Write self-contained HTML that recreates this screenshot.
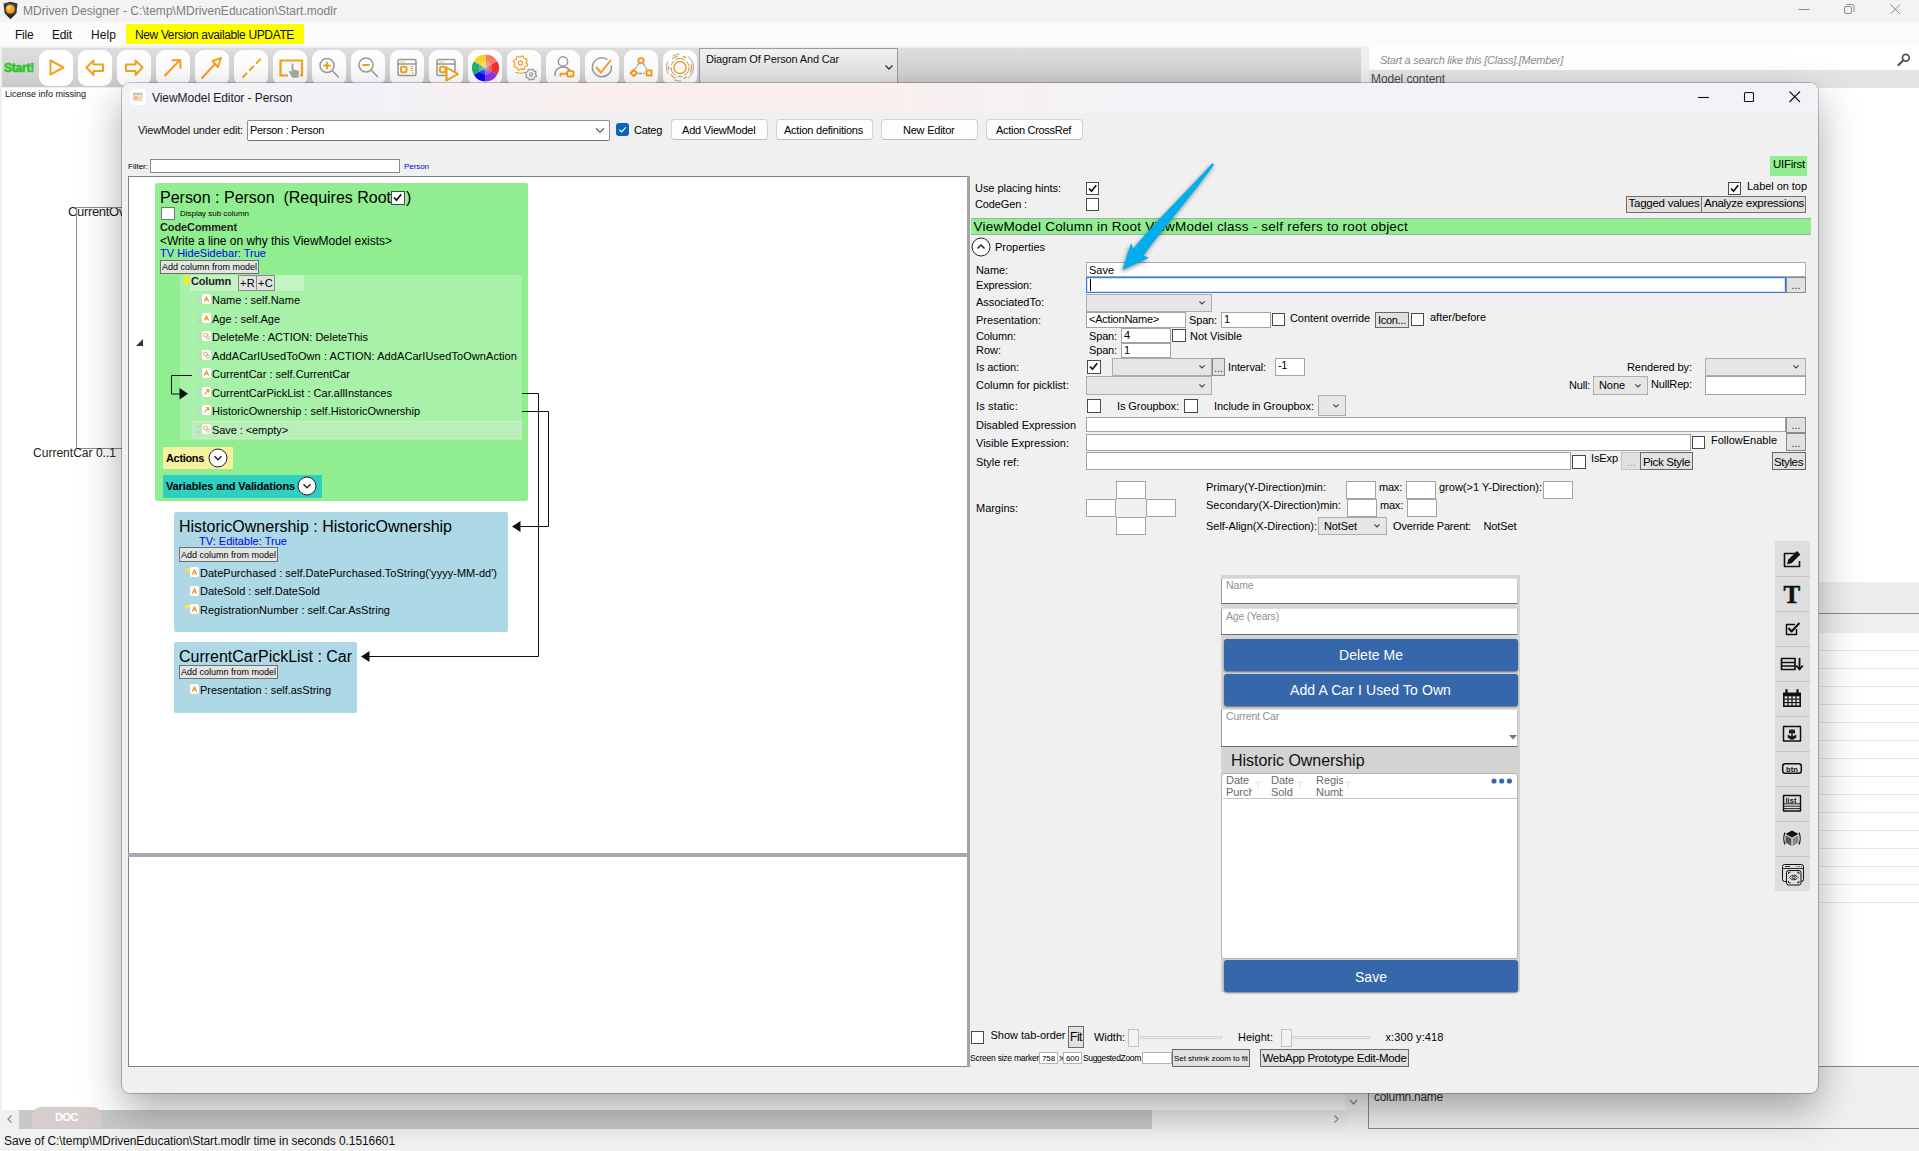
<!DOCTYPE html>
<html><head><meta charset="utf-8"><title>MDriven Designer</title>
<style>
*{box-sizing:border-box;margin:0;padding:0}
html,body{width:1919px;height:1151px;overflow:hidden;background:#fff}
body{font-family:"Liberation Sans",sans-serif;font-size:11px;color:#000;position:relative}
.a{position:absolute;white-space:nowrap}
.t{position:absolute;white-space:pre;line-height:1}
svg{overflow:visible}
</style></head><body>
<div class="a" style="left:0px;top:0px;width:1919px;height:22px;background:#f3f3f3"></div>
<svg class="a" style="left:2px;top:1px" width="17" height="19" viewBox="0 0 17 19"><path d="M1.5 2.5 L8.5 0.8 L15.5 2.5 L14.5 12 L8.5 18 L2.5 12 Z" fill="#3a3a3a"/><circle cx="8.3" cy="8" r="4.6" fill="#f7a21c"/><circle cx="7" cy="6.6" r="2.2" fill="#ffd268"/><path d="M3 12.5 L8.5 15 L14 12.5 L8.5 18Z" fill="#222"/></svg>
<div class="t" style="left:23px;top:5px;font-size:12px;letter-spacing:0.034px;color:#7d7d7d;">MDriven Designer - C:\temp\MDrivenEducation\Start.modlr</div>
<svg class="a" style="left:1790px;top:0" width="129" height="22" viewBox="0 0 129 22" fill="none" stroke="#8a8a8a" stroke-width="1"><path d="M8.5 9.5h11"/><rect x="54.500" y="6.500" width="7" height="7" rx="1.5"/><path d="M56.5 4.500h5.500a2 2 0 0 1 2 2v5.500"/><path d="M100.500 4.500l9.500 9.500M110 4.500l-9.500 9.500"/></svg>
<div class="a" style="left:0px;top:22px;width:1919px;height:24px;background:#fbfbfb"></div>
<div class="t" style="left:15px;top:29px;font-size:12px;letter-spacing:-0.211px;color:#111;">File</div>
<div class="t" style="left:52px;top:29px;font-size:12px;letter-spacing:-0.172px;color:#111;">Edit</div>
<div class="t" style="left:91px;top:29px;font-size:12px;letter-spacing:0.078px;color:#111;">Help</div>
<div class="a" style="left:126px;top:24px;width:178px;height:20px;background:#ffff00"></div>
<div class="t" style="left:135px;top:29px;font-size:12px;letter-spacing:-0.364px;color:#111;">New Version available UPDATE</div>
<div class="a" style="left:0px;top:46px;width:1919px;height:42px;background:#f0f0f0"></div>
<div class="a" style="left:2px;top:48px;width:1359px;height:39px;background:linear-gradient(#dddddd,#d4d4d4 60%,#cacaca)"></div>
<div class="t" style="left:4px;top:62px;font-size:12px;letter-spacing:-0.224px;color:#2fc42f;font-weight:700;text-shadow:0 0 1.5px #4fd24f;-webkit-text-stroke:.4px #2fc42f">Start!</div>
<svg class="a" style="left:0;top:46px" width="1361" height="42" viewBox="0 46 1361 42" fill="none" stroke-linecap="round" stroke-linejoin="round"><rect x="39" y="50" width="34" height="36" rx="9" fill="#fefefe" stroke="none"/><rect x="78" y="50" width="34" height="36" rx="9" fill="#fefefe" stroke="none"/><rect x="117" y="50" width="34" height="36" rx="9" fill="#fefefe" stroke="none"/><rect x="156" y="50" width="34" height="36" rx="9" fill="#fefefe" stroke="none"/><rect x="195" y="50" width="34" height="36" rx="9" fill="#fefefe" stroke="none"/><rect x="234" y="50" width="34" height="36" rx="9" fill="#fefefe" stroke="none"/><rect x="273" y="50" width="34" height="36" rx="9" fill="#fefefe" stroke="none"/><rect x="312" y="50" width="34" height="36" rx="9" fill="#fefefe" stroke="none"/><rect x="351" y="50" width="34" height="36" rx="9" fill="#fefefe" stroke="none"/><rect x="390" y="50" width="34" height="36" rx="9" fill="#fefefe" stroke="none"/><rect x="429" y="50" width="34" height="36" rx="9" fill="#fefefe" stroke="none"/><rect x="468" y="50" width="34" height="36" rx="9" fill="#fefefe" stroke="none"/><rect x="507" y="50" width="34" height="36" rx="9" fill="#fefefe" stroke="none"/><rect x="546" y="50" width="34" height="36" rx="9" fill="#fefefe" stroke="none"/><rect x="585" y="50" width="34" height="36" rx="9" fill="#fefefe" stroke="none"/><rect x="624" y="50" width="34" height="36" rx="9" fill="#fefefe" stroke="none"/><rect x="663" y="50" width="34" height="36" rx="9" fill="#fefefe" stroke="none"/><g transform="translate(39,50)"><path d="M11.500 10.500V24.500L24.500 17.500Z" stroke="#f5a01f" stroke-width="2"/></g><g transform="translate(78,50)"><path d="M8.500 17.500L15.500 10.500V14.500H25V21H15.500V25Z" stroke="#f5a01f" stroke-width="2"/></g><g transform="translate(117,50)"><path d="M25.500 17.500L18.500 10.500V14.500H9V21H18.500V25Z" stroke="#f5a01f" stroke-width="2"/></g><g transform="translate(156,50)"><path d="M9 25.500L24 10M16.500 10.300L24.200 10L24.500 18" stroke="#f5a01f" stroke-width="2"/></g><g transform="translate(195,50)"><path d="M7 28L20 14M26 8L17.500 11L23 17Z" stroke="#f5a01f" stroke-width="2"/></g><g transform="translate(234,50)"><path d="M9 27L27 8.500" stroke="#f5a01f" stroke-width="2" stroke-dasharray="5 4.800" stroke-linecap="round"/></g><g transform="translate(273,50)"><path d="M15 25.500H7.500V10.500H29V25.500H27" stroke="#f5a01f" stroke-width="2.2" stroke-linecap="butt" stroke-linejoin="miter"/><path d="M18.500 14.500c0-1.300 2-1.300 2 0v5l4 .8c1.500.4 1.800 1.500 1.500 3l-.8 4.500h-6l-3.200-5.500c-.6-1.200.8-2 1.700-1l.8 1z" fill="#a9a9a9" stroke="none"/></g><g transform="translate(312,50)"><circle cx="15" cy="15.500" r="7" stroke="#9a9a9a" stroke-width="1.5"/><path d="M20.300 20.800L26.500 27" stroke="#9a9a9a" stroke-width="1.5"/><path d="M12 15.500h6M15 12.500v6" stroke="#f5a01f" stroke-width="1.8"/></g><g transform="translate(351,50)"><circle cx="15" cy="15" r="7" stroke="#9a9a9a" stroke-width="1.5"/><path d="M20.300 20.300L26.500 26.500" stroke="#9a9a9a" stroke-width="1.5"/><path d="M12 15h6" stroke="#f5a01f" stroke-width="1.8"/></g><g transform="translate(390,50)"><rect x="8" y="9.500" width="18" height="16" rx="1.500" stroke="#9a9a9a" stroke-width="1.5"/><path d="M8 14h18" stroke="#9a9a9a" stroke-width="1.5"/><path d="M10.500 11.800h4.500" stroke="#f5a01f" stroke-width="1.200" stroke-dasharray="1 .8" stroke-linecap="butt"/><rect x="11" y="16.800" width="5.500" height="5.500" rx="1" stroke="#f5a01f" stroke-width="2"/><path d="M20.500 16.500h2.500M20.500 18.500h2.500M20.500 20.500h2.500M22 23h1.500" stroke="#f5a01f" stroke-width="1" stroke-linecap="butt"/></g><g transform="translate(429,50)"><rect x="8" y="9.500" width="18" height="16" rx="1.500" stroke="#9a9a9a" stroke-width="1.5"/><path d="M8 14h18" stroke="#9a9a9a" stroke-width="1.5"/><path d="M10.500 11.800h4.500" stroke="#f5a01f" stroke-width="1.200" stroke-dasharray="1 .8" stroke-linecap="butt"/><rect x="11" y="16.800" width="5.500" height="5.500" rx="1" stroke="#f5a01f" stroke-width="2"/><path d="M17.500 17.500V30.500L29 24Z" stroke="#f5a01f" stroke-width="2" fill="#fefefe"/></g><g transform="translate(468,50)"><path d="M17.5 18L17.50 4.50A13.5 13.5 0 0 1 29.19 11.25Z" fill="#fa7a6a" stroke="none"/><path d="M17.5 18L29.19 11.25A13.5 13.5 0 0 1 29.19 24.75Z" fill="#f23030" stroke="none"/><path d="M17.5 18L29.19 24.75A13.5 13.5 0 0 1 17.50 31.50Z" fill="#8a35e6" stroke="none"/><path d="M17.5 18L17.50 31.50A13.5 13.5 0 0 1 5.81 24.75Z" fill="#0a0af0" stroke="none"/><path d="M17.5 18L5.81 24.75A13.5 13.5 0 0 1 5.81 11.25Z" fill="#1fb273" stroke="none"/><path d="M17.5 18L5.81 11.25A13.5 13.5 0 0 1 17.50 4.50Z" fill="#f8d223" stroke="none"/><circle cx="17.5" cy="18" r="7" fill="#fff" fill-opacity=".22" stroke="none"/><circle cx="17.5" cy="18" r="3.500" fill="#fff" fill-opacity=".2" stroke="none"/></g><g transform="translate(507,50)"><path d="M20.66 14.42L20.24 15.79L18.36 16.24L17.63 17.13L17.56 19.07L16.29 19.74L14.64 18.73L13.50 18.84L12.08 20.16L10.71 19.74L10.26 17.86L9.37 17.13L7.43 17.06L6.76 15.79L7.77 14.14L7.66 13.00L6.34 11.58L6.76 10.21L8.64 9.76L9.37 8.87L9.44 6.93L10.71 6.26L12.36 7.27L13.50 7.16L14.92 5.84L16.29 6.26L16.74 8.14L17.63 8.87L19.57 8.94L20.24 10.21L19.23 11.86L19.34 13.00Z" stroke="#f5a01f" stroke-width="1.2"/><circle cx="13.5" cy="13" r="2.04" stroke="#f5a01f" stroke-width="1.2"/><path d="M9 22.500c3 1 6 1 9 0" stroke="#f5a01f" stroke-width="1.100"/><path d="M29.49 25.59L29.17 26.64L27.72 26.99L27.17 27.67L27.11 29.16L26.14 29.67L24.87 28.89L24.00 28.98L22.91 29.99L21.86 29.67L21.51 28.22L20.83 27.67L19.34 27.61L18.83 26.64L19.61 25.37L19.52 24.50L18.51 23.41L18.83 22.36L20.28 22.01L20.83 21.33L20.89 19.84L21.86 19.33L23.13 20.11L24.00 20.02L25.09 19.01L26.14 19.33L26.49 20.78L27.17 21.33L28.66 21.39L29.17 22.36L28.39 23.63L28.48 24.50Z" stroke="#9a9a9a" stroke-width="1.2"/><circle cx="24" cy="24.5" r="1.57" stroke="#9a9a9a" stroke-width="1.2"/></g><g transform="translate(546,50)"><circle cx="17" cy="11.500" r="4.700" stroke="#9a9a9a" stroke-width="1.5"/><path d="M9 25.500c-.5-6 4-8.500 8-8.500 3 0 5 1.200 6.500 3" stroke="#9a9a9a" stroke-width="1.5"/><rect x="21" y="21" width="6.500" height="5.500" rx="2" stroke="#f5a01f" stroke-width="2"/><path d="M21 23.800h-6.500v2" stroke="#f5a01f" stroke-width="2"/><circle cx="24.500" cy="23.800" r=".6" fill="#f5a01f" stroke="none"/></g><g transform="translate(585,50)"><path d="M22 9.300A9.500 9.500 0 1 0 26.300 16" stroke="#9a9a9a" stroke-width="1.5"/><path d="M11.500 17.500L16 22.500L25.500 10.500" stroke="#f5a01f" stroke-width="2"/></g><g transform="translate(624,50)"><circle cx="17" cy="10.500" r="2.600" stroke="#f5a01f" stroke-width="2"/><path d="M9.800 19.800L13 23L9.800 26.200L6.600 23Z" stroke="#f5a01f" stroke-width="2"/><rect x="22.500" y="20.500" width="5" height="5" stroke="#f5a01f" stroke-width="2"/><path d="M14.800 13.500L11.500 18.500M19.200 13.500L22.500 18.500M15 23.500H20" stroke="#9a9a9a" stroke-width="1.300" stroke-dasharray="2.500 2"/></g><g transform="translate(663,50)"><circle cx="17" cy="17.500" r="6" stroke="#f5a01f" stroke-width="1.400"/><circle cx="17" cy="17.500" r="9" stroke="#9a9a9a" stroke-width="1" stroke-dasharray="9 3 4 3"/><circle cx="17" cy="17.500" r="11.500" stroke="#f5a01f" stroke-width="1.300" stroke-dasharray="5 6 3 9"/><circle cx="17" cy="17.500" r="13.500" stroke="#9a9a9a" stroke-width=".9" stroke-dasharray="12 8 6 10"/></g></svg>
<div class="a" style="left:699px;top:48px;width:199px;height:40px;background:linear-gradient(#f0f0f0,#dddddd);border:1px solid #9c9c9c"></div>
<div class="t" style="left:706px;top:54px;font-size:11px;letter-spacing:-0.158px;color:#111;">Diagram Of Person And Car</div>
<svg class="a" style="left:884px;top:64px" width="10" height="7" viewBox="0 0 10 7" fill="none" stroke="#333" stroke-width="1.300"><path d="M1.500 1.500L5 5L8.500 1.500"/></svg>
<div class="a" style="left:1369px;top:46px;width:550px;height:24px;background:#fff"></div>
<div class="t" style="left:1380px;top:55px;font-size:11px;letter-spacing:-0.278px;color:#8e8e8e;font-style:italic;">Start a search like this [Class].[Member]</div>
<svg class="a" style="left:1896px;top:52px" width="16" height="16" viewBox="0 0 16 16" fill="none" stroke="#555" stroke-width="1.800"><circle cx="9.800" cy="5.800" r="3.400"/><path d="M7.300 8.300L2.500 13" stroke-width="2.200" stroke-linecap="round"/></svg>
<div class="a" style="left:1369px;top:70px;width:550px;height:18px;background:#e4e4e4"></div>
<div class="t" style="left:1371px;top:73px;font-size:12px;letter-spacing:-0.107px;color:#4a4a4a;">Model content</div>
<div class="a" style="left:0px;top:88px;width:2px;height:1040px;background:#f0f0f0"></div>
<div class="t" style="left:5px;top:90px;font-size:9px;letter-spacing:-0.002px;color:#111;">License info missing</div>
<div class="t" style="left:68px;top:205px;font-size:13px;letter-spacing:-0.33px;color:#222;">CurrentOv</div>
<div class="a" style="left:76px;top:207px;width:1px;height:242px;background:#8c8c8c"></div>
<div class="a" style="left:76px;top:207px;width:50px;height:1px;background:#8c8c8c"></div>
<div class="a" style="left:76px;top:448px;width:50px;height:1px;background:#8c8c8c"></div>
<div class="t" style="left:33px;top:447px;font-size:12px;letter-spacing:0.02px;color:#222;">CurrentCar 0..1</div>
<div class="a" style="left:1819px;top:582px;width:100px;height:31px;background:#eeeeee"></div>
<div class="a" style="left:1819px;top:613px;width:100px;height:1px;background:#8a8a8a"></div>
<div class="a" style="left:1819px;top:614px;width:100px;height:19px;background:#efefef"></div>
<div class="a" style="left:1819px;top:650px;width:100px;height:1px;background:#e6e6e6"></div>
<div class="a" style="left:1819px;top:668px;width:100px;height:1px;background:#e6e6e6"></div>
<div class="a" style="left:1819px;top:686px;width:100px;height:1px;background:#e6e6e6"></div>
<div class="a" style="left:1819px;top:704px;width:100px;height:1px;background:#e6e6e6"></div>
<div class="a" style="left:1819px;top:722px;width:100px;height:1px;background:#e6e6e6"></div>
<div class="a" style="left:1819px;top:740px;width:100px;height:1px;background:#e6e6e6"></div>
<div class="a" style="left:1819px;top:758px;width:100px;height:1px;background:#e6e6e6"></div>
<div class="a" style="left:1819px;top:776px;width:100px;height:1px;background:#e6e6e6"></div>
<div class="a" style="left:1819px;top:794px;width:100px;height:1px;background:#e6e6e6"></div>
<div class="a" style="left:1819px;top:812px;width:100px;height:1px;background:#e6e6e6"></div>
<div class="a" style="left:1819px;top:830px;width:100px;height:1px;background:#e6e6e6"></div>
<div class="a" style="left:1819px;top:848px;width:100px;height:1px;background:#e6e6e6"></div>
<div class="a" style="left:1819px;top:866px;width:100px;height:1px;background:#e6e6e6"></div>
<div class="a" style="left:1819px;top:884px;width:100px;height:1px;background:#e6e6e6"></div>
<div class="a" style="left:1819px;top:902px;width:100px;height:1px;background:#e6e6e6"></div>
<div class="a" style="left:1819px;top:1066px;width:100px;height:1px;background:#8a8a8a"></div>
<div class="a" style="left:1368px;top:1067px;width:551px;height:62px;background:#f0f0f0;border-left:1px solid #8a8a8a;border-bottom:1px solid #8a8a8a"></div>
<div class="t" style="left:1374px;top:1091px;font-size:12px;letter-spacing:-0.277px;color:#333;">column.name</div>
<div class="a" style="left:0px;top:1110px;width:1368px;height:19px;background:#f0f0f0"></div>
<div class="a" style="left:1345px;top:1093px;width:23px;height:17px;background:#f6f6f6"></div>
<div class="a" style="left:19px;top:1110px;width:1327px;height:19px;background:#ededed"></div>
<div class="a" style="left:19px;top:1110px;width:1133px;height:19px;background:#c8c8c8"></div>
<div class="a" style="left:32px;top:1107px;width:70px;height:21px;background:#d8cdcd;border-radius:9px 9px 0 0"></div>
<div class="t" style="left:55px;top:1112px;font-size:11px;letter-spacing:-0.484px;color:#fff;font-weight:700;">DOC</div>
<svg class="a" style="left:6px;top:1113px" width="8" height="12" viewBox="0 0 8 12" fill="none" stroke="#8a8a8a" stroke-width="1.200"><path d="M5.500 2.500L2 6L5.500 9.500"/></svg>
<svg class="a" style="left:1332px;top:1113px" width="8" height="12" viewBox="0 0 8 12" fill="none" stroke="#8a8a8a" stroke-width="1.200"><path d="M2.500 2.500L6 6L2.500 9.500"/></svg>
<svg class="a" style="left:1349px;top:1098px" width="10" height="8" viewBox="0 0 10 8" fill="none" stroke="#8a8a8a" stroke-width="1.200"><path d="M1 2L4.500 6L8 2"/></svg>
<div class="a" style="left:0px;top:1129px;width:1919px;height:22px;background:#f1f1f1"></div>
<div class="t" style="left:4px;top:1135px;font-size:12px;letter-spacing:-0.074px;color:#111;">Save of C:\temp\MDrivenEducation\Start.modlr time in seconds 0.1516601</div>
<div class="a" style="left:122px;top:83px;width:1696px;height:1010px;background:#f0f0f0;border-radius:8px;box-shadow:0 0 0 1px rgba(0,0,0,.22),0 16px 40px 0 rgba(0,0,0,.34)"></div>
<div class="a" style="left:122px;top:83px;width:1696px;height:30px;border-radius:8px 8px 0 0;background:linear-gradient(90deg,#f1f2f7 0%,#f3f2f6 16%,#fbefed 30%,#fbefed 42%,#f3f3f7 60%,#f3f3f7 100%)"></div>
<svg class="a" style="left:130px;top:89px" width="16" height="16" viewBox="0 0 16 16"><rect x="0" y="0" width="16" height="16" rx="4" fill="#fff"/><rect x="3.200" y="4" width="9" height="7.500" fill="#f4e7d6" stroke="#d0c6ba" stroke-width=".7"/><rect x="3.200" y="4" width="9" height="2" fill="#c9c2ba"/><rect x="4.500" y="7.500" width="3" height="2.800" fill="#f4ab4e"/><rect x="8.800" y="7.500" width="2" height="2.800" fill="#f7c98c"/></svg>
<div class="t" style="left:152px;top:92px;font-size:12px;letter-spacing:-0.054px;color:#1a1a1a;">ViewModel Editor - Person</div>
<svg class="a" style="left:1690px;top:85px" width="120" height="24" viewBox="0 0 120 24" fill="none" stroke="#111" stroke-width="1.100"><path d="M8 12.500h11"/><rect x="54.500" y="7.500" width="9" height="9" rx="1"/><path d="M99.500 6.500l10.500 10.500M110 6.500l-10.500 10.500"/></svg>
<div class="t" style="left:138px;top:125px;font-size:11px;letter-spacing:-0.174px;color:#111;">ViewModel under edit:</div>
<div class="a" style="left:247px;top:120px;width:363px;height:21px;background:#fff;border:1px solid #8e8e8e;border-bottom-color:#707070;border-radius:2px"></div>
<div class="t" style="left:250px;top:125px;font-size:11px;letter-spacing:-0.325px;">Person : Person</div>
<svg class="a" style="left:595px;top:127px" width="10" height="7" viewBox="0 0 10 7" fill="none" stroke="#444" stroke-width="1.100"><path d="M1 1.300L5 5.300L9 1.300"/></svg>
<div class="a" style="left:616px;top:123px;width:13px;height:13px;background:#0b63c2;border-radius:3px"><svg width="13" height="13" viewBox="0 0 13 13" fill="none" stroke="#fff" stroke-width="1.200" style="position:absolute;left:0;top:0"><path d="M3.300 6.700L5.600 9L9.800 4.300"/></svg></div>
<div class="t" style="left:634px;top:125px;font-size:11px;letter-spacing:-0.272px;">Categ</div>
<div class="a" style="left:671px;top:119px;width:97px;height:21px;background:#fdfdfd;border:1px solid #d2d2d2;border-bottom-color:#bcbcbc;border-radius:4px"></div>
<div class="t" style="left:682px;top:125px;font-size:11px;letter-spacing:-0.21px;">Add ViewModel</div>
<div class="a" style="left:776px;top:119px;width:97px;height:21px;background:#fdfdfd;border:1px solid #d2d2d2;border-bottom-color:#bcbcbc;border-radius:4px"></div>
<div class="t" style="left:784px;top:125px;font-size:11px;letter-spacing:-0.232px;">Action definitions</div>
<div class="a" style="left:881px;top:119px;width:97px;height:21px;background:#fdfdfd;border:1px solid #d2d2d2;border-bottom-color:#bcbcbc;border-radius:4px"></div>
<div class="t" style="left:903px;top:125px;font-size:11px;letter-spacing:-0.23px;">New Editor</div>
<div class="a" style="left:986px;top:119px;width:97px;height:21px;background:#fdfdfd;border:1px solid #d2d2d2;border-bottom-color:#bcbcbc;border-radius:4px"></div>
<div class="t" style="left:996px;top:125px;font-size:11px;letter-spacing:-0.299px;">Action CrossRef</div>
<div class="t" style="left:128px;top:163px;font-size:8px;">Filter:</div>
<div class="a" style="left:150px;top:159px;width:250px;height:14px;background:#fff;border:1px solid #8a8a8a"></div>
<div class="t" style="left:404px;top:163px;font-size:8px;letter-spacing:-0.06px;color:#0000e0;">Person</div>
<div class="a" style="left:128px;top:176px;width:840px;height:681px;background:#fff;border:1px solid #80808c"></div>
<div class="a" style="left:128px;top:853px;width:840px;height:4px;background:#a9a9b2"></div>
<div class="a" style="left:128px;top:857px;width:840px;height:210px;background:#fff;border:1px solid #80808c;border-top:none"></div>
<div class="a" style="left:967px;top:176px;width:3px;height:891px;background:#a4a4a4"></div>
<svg class="a" style="left:136px;top:339px" width="7" height="7" viewBox="0 0 7 7"><path d="M7 0V7H0Z" fill="#333"/></svg>
<div class="a" style="left:155px;top:183px;width:373px;height:318px;background:#90ee90;border-radius:2px"></div>
<div class="t" style="left:160px;top:190px;font-size:16px;letter-spacing:-0.007px;">Person : Person  (Requires Root</div>
<div class="a" style="left:391px;top:191px;width:14px;height:14px;background:#fff;border:1px solid #4a4a4a"><svg width="11" height="11" viewBox="0 0 11 11" style="position:absolute;left:0;top:0" fill="none" stroke="#111" stroke-width="1.700"><path d="M2 5.500L4.500 8.200L9.200 2.300"/></svg></div>
<div class="t" style="left:406px;top:190px;font-size:16px;">)</div>
<div class="a" style="left:161px;top:207px;width:14px;height:13px;background:#fff;border:1px solid #777"></div>
<div class="t" style="left:180px;top:210px;font-size:8px;letter-spacing:-0.021px;">Display sub column</div>
<div class="t" style="left:160px;top:222px;font-size:11px;letter-spacing:-0.112px;color:#222;font-weight:700;">CodeComment</div>
<div class="t" style="left:160px;top:235px;font-size:12px;letter-spacing:-0.023px;">&lt;Write a line on why this ViewModel exists&gt;</div>
<div class="t" style="left:160px;top:248px;font-size:11px;letter-spacing:0.011px;color:#0000f0;">TV HideSidebar: True</div>
<div class="a" style="left:160px;top:260px;width:99px;height:14px;background:#e4e4e4;border:1px solid #707070"></div>
<div class="t" style="left:162px;top:263px;font-size:9px;letter-spacing:-0.002px;color:#000;">Add column from model</div>
<div class="a" style="left:180px;top:275px;width:342px;height:165px;background:#a8f1a8"></div>
<div class="a" style="left:190px;top:275px;width:114px;height:16px;background:#c2f5c2"></div>
<svg class="a" style="left:182px;top:275px" width="9" height="10" viewBox="0 0 9 10"><path d="M3 0h3v4.500h3L4.500 10L0 4.500h3z" fill="#ffe81a"/></svg>
<div class="t" style="left:191px;top:276px;font-size:11px;letter-spacing:-0.159px;color:#222;font-weight:700;">Column</div>
<div class="a" style="left:238px;top:275px;width:19px;height:16px;background:#e2e2e2;border:1px solid #8a8a8a"></div>
<div class="t" style="left:240px;top:278px;font-size:11px;letter-spacing:0.312px;color:#000;">+R</div>
<div class="a" style="left:256px;top:275px;width:19px;height:16px;background:#e2e2e2;border:1px solid #8a8a8a"></div>
<div class="t" style="left:258px;top:278px;font-size:11px;letter-spacing:0.312px;color:#000;">+C</div>
<div class="a" style="left:192px;top:421px;width:330px;height:18px;background:#b9efb9;border:1px solid #cdeacd"></div>
<div class="a" style="left:197px;top:295px;width:5px;height:3px;background:rgba(205,205,205,.85);border-radius:1.5px"></div>
<div class="a" style="left:197px;top:301px;width:5px;height:3px;background:rgba(205,205,205,.85);border-radius:1.5px"></div>
<div class="a" style="left:202px;top:294px;width:9px;height:10px;background:#fdfdfd;border-radius:2px"><svg width="9" height="10" viewBox="0 0 9 10" style="position:absolute;left:0;top:0" fill="none" stroke="#f28c1e" stroke-width="1.100"><path d="M2.300 7.500L4.500 3L6.700 7.500M3.200 6h2.600"/></svg></div>
<div class="t" style="left:212px;top:295px;font-size:11px;letter-spacing:-0.002px;">Name : self.Name</div>
<div class="a" style="left:197px;top:314px;width:5px;height:3px;background:rgba(205,205,205,.85);border-radius:1.5px"></div>
<div class="a" style="left:197px;top:320px;width:5px;height:3px;background:rgba(205,205,205,.85);border-radius:1.5px"></div>
<div class="a" style="left:202px;top:313px;width:9px;height:10px;background:#fdfdfd;border-radius:2px"><svg width="9" height="10" viewBox="0 0 9 10" style="position:absolute;left:0;top:0" fill="none" stroke="#f28c1e" stroke-width="1.100"><path d="M2.300 7.500L4.500 3L6.700 7.500M3.200 6h2.600"/></svg></div>
<div class="t" style="left:212px;top:314px;font-size:11px;letter-spacing:-0.036px;">Age : self.Age</div>
<div class="a" style="left:197px;top:332px;width:5px;height:3px;background:rgba(205,205,205,.85);border-radius:1.5px"></div>
<div class="a" style="left:197px;top:338px;width:5px;height:3px;background:rgba(205,205,205,.85);border-radius:1.5px"></div>
<div class="a" style="left:202px;top:331px;width:9px;height:10px;background:#fdfdfd;border-radius:2px"><svg width="9" height="10" viewBox="0 0 9 10" style="position:absolute;left:0;top:0" fill="none" stroke="#f2a04a" stroke-width=".9"><circle cx="3.500" cy="4" r="2"/><circle cx="6" cy="6.500" r="1.600" stroke="#b0b0b0"/></svg></div>
<div class="t" style="left:212px;top:332px;font-size:11px;letter-spacing:0.004px;">DeleteMe : ACTION: DeleteThis</div>
<div class="a" style="left:197px;top:351px;width:5px;height:3px;background:rgba(205,205,205,.85);border-radius:1.5px"></div>
<div class="a" style="left:197px;top:357px;width:5px;height:3px;background:rgba(205,205,205,.85);border-radius:1.5px"></div>
<div class="a" style="left:202px;top:350px;width:9px;height:10px;background:#fdfdfd;border-radius:2px"><svg width="9" height="10" viewBox="0 0 9 10" style="position:absolute;left:0;top:0" fill="none" stroke="#f2a04a" stroke-width=".9"><circle cx="3.500" cy="4" r="2"/><circle cx="6" cy="6.500" r="1.600" stroke="#b0b0b0"/></svg></div>
<div class="t" style="left:212px;top:351px;font-size:11px;letter-spacing:0.07px;">AddACarIUsedToOwn : ACTION: AddACarIUsedToOwnAction</div>
<div class="a" style="left:197px;top:369px;width:5px;height:3px;background:rgba(205,205,205,.85);border-radius:1.5px"></div>
<div class="a" style="left:197px;top:375px;width:5px;height:3px;background:rgba(205,205,205,.85);border-radius:1.5px"></div>
<div class="a" style="left:202px;top:368px;width:9px;height:10px;background:#fdfdfd;border-radius:2px"><svg width="9" height="10" viewBox="0 0 9 10" style="position:absolute;left:0;top:0" fill="none" stroke="#f28c1e" stroke-width="1.100"><path d="M2.300 7.500L4.500 3L6.700 7.500M3.200 6h2.600"/></svg></div>
<div class="t" style="left:212px;top:369px;font-size:11px;letter-spacing:-0.006px;">CurrentCar : self.CurrentCar</div>
<div class="a" style="left:197px;top:388px;width:5px;height:3px;background:rgba(205,205,205,.85);border-radius:1.5px"></div>
<div class="a" style="left:197px;top:394px;width:5px;height:3px;background:rgba(205,205,205,.85);border-radius:1.5px"></div>
<div class="a" style="left:202px;top:387px;width:9px;height:10px;background:#fdfdfd;border-radius:2px"><svg width="9" height="10" viewBox="0 0 9 10" style="position:absolute;left:0;top:0" fill="none" stroke="#f28c1e" stroke-width="1.100"><path d="M2.500 7.500L6.500 3M4 2.800h2.700v2.700"/></svg></div>
<div class="t" style="left:212px;top:388px;font-size:11px;letter-spacing:0.007px;">CurrentCarPickList : Car.allInstances</div>
<div class="a" style="left:197px;top:406px;width:5px;height:3px;background:rgba(205,205,205,.85);border-radius:1.5px"></div>
<div class="a" style="left:197px;top:412px;width:5px;height:3px;background:rgba(205,205,205,.85);border-radius:1.5px"></div>
<div class="a" style="left:202px;top:405px;width:9px;height:10px;background:#fdfdfd;border-radius:2px"><svg width="9" height="10" viewBox="0 0 9 10" style="position:absolute;left:0;top:0" fill="none" stroke="#f28c1e" stroke-width="1.100"><path d="M2.500 7.500L6.500 3M4 2.800h2.700v2.700"/></svg></div>
<div class="t" style="left:212px;top:406px;font-size:11px;letter-spacing:0.004px;">HistoricOwnership : self.HistoricOwnership</div>
<div class="a" style="left:197px;top:425px;width:5px;height:3px;background:rgba(205,205,205,.85);border-radius:1.5px"></div>
<div class="a" style="left:197px;top:431px;width:5px;height:3px;background:rgba(205,205,205,.85);border-radius:1.5px"></div>
<div class="a" style="left:202px;top:424px;width:9px;height:10px;background:#fdfdfd;border-radius:2px"><svg width="9" height="10" viewBox="0 0 9 10" style="position:absolute;left:0;top:0" fill="none" stroke="#f2a04a" stroke-width=".9"><circle cx="3.500" cy="4" r="2"/><circle cx="6" cy="6.500" r="1.600" stroke="#b0b0b0"/></svg></div>
<div class="t" style="left:212px;top:425px;font-size:11px;letter-spacing:-0.075px;">Save : &lt;empty&gt;</div>
<div class="a" style="left:163px;top:447px;width:70px;height:22px;background:#f7f09f"></div>
<div class="t" style="left:166px;top:453px;font-size:11px;letter-spacing:-0.335px;font-weight:700;">Actions</div>
<svg class="a" style="left:208px;top:448px" width="20" height="20" viewBox="0 0 20 20" fill="none"><circle cx="10" cy="10" r="9" fill="#fff" stroke="#222" stroke-width="1"/><path d="M6.500 8.300L10 11.800L13.500 8.300" stroke="#222" stroke-width="1.500"/></svg>
<div class="a" style="left:163px;top:475px;width:159px;height:23px;background:#2fcfc2"></div>
<div class="t" style="left:166px;top:481px;font-size:11px;letter-spacing:-0.122px;font-weight:700;">Variables and Validations</div>
<svg class="a" style="left:297px;top:476px" width="20" height="20" viewBox="0 0 20 20" fill="none"><circle cx="10" cy="10" r="9" fill="#fff" stroke="#222" stroke-width="1"/><path d="M6.500 8.300L10 11.800L13.500 8.300" stroke="#222" stroke-width="1.500"/></svg>
<div class="a" style="left:174px;top:512px;width:334px;height:120px;background:#add8e6;border-radius:2px"></div>
<div class="t" style="left:179px;top:519px;font-size:16px;letter-spacing:0.001px;">HistoricOwnership : HistoricOwnership</div>
<div class="t" style="left:199px;top:536px;font-size:11px;letter-spacing:0.02px;color:#0000f0;">TV: Editable: True</div>
<div class="a" style="left:179px;top:547px;width:99px;height:15px;background:#e4e4e4;border:1px solid #707070"></div>
<div class="t" style="left:181px;top:551px;font-size:9px;letter-spacing:-0.002px;color:#000;">Add column from model</div>
<div class="a" style="left:185px;top:568px;width:5px;height:3px;background:#ffee10;border-radius:1.5px"></div>
<div class="a" style="left:185px;top:574px;width:5px;height:3px;background:rgba(205,205,205,.85);border-radius:1.5px"></div>
<div class="a" style="left:190px;top:567px;width:9px;height:10px;background:#fdfdfd;border-radius:2px"><svg width="9" height="10" viewBox="0 0 9 10" style="position:absolute;left:0;top:0" fill="none" stroke="#f28c1e" stroke-width="1.100"><path d="M2.300 7.500L4.500 3L6.700 7.500M3.200 6h2.600"/></svg></div>
<div class="t" style="left:200px;top:568px;font-size:11px;letter-spacing:0.021px;">DatePurchased : self.DatePurchased.ToString('yyyy-MM-dd')</div>
<div class="a" style="left:185px;top:587px;width:5px;height:3px;background:rgba(205,205,205,.85);border-radius:1.5px"></div>
<div class="a" style="left:185px;top:593px;width:5px;height:3px;background:rgba(205,205,205,.85);border-radius:1.5px"></div>
<div class="a" style="left:190px;top:586px;width:9px;height:10px;background:#fdfdfd;border-radius:2px"><svg width="9" height="10" viewBox="0 0 9 10" style="position:absolute;left:0;top:0" fill="none" stroke="#f28c1e" stroke-width="1.100"><path d="M2.300 7.500L4.500 3L6.700 7.500M3.200 6h2.600"/></svg></div>
<div class="t" style="left:200px;top:586px;font-size:11px;letter-spacing:0.006px;">DateSold : self.DateSold</div>
<div class="a" style="left:185px;top:605px;width:5px;height:3px;background:#ffee10;border-radius:1.5px"></div>
<div class="a" style="left:185px;top:611px;width:5px;height:3px;background:rgba(205,205,205,.85);border-radius:1.5px"></div>
<div class="a" style="left:190px;top:604px;width:9px;height:10px;background:#fdfdfd;border-radius:2px"><svg width="9" height="10" viewBox="0 0 9 10" style="position:absolute;left:0;top:0" fill="none" stroke="#f28c1e" stroke-width="1.100"><path d="M2.300 7.500L4.500 3L6.700 7.500M3.200 6h2.600"/></svg></div>
<div class="t" style="left:200px;top:605px;font-size:11px;letter-spacing:0.028px;">RegistrationNumber : self.Car.AsString</div>
<div class="a" style="left:174px;top:642px;width:183px;height:71px;background:#add8e6;border-radius:2px"></div>
<div class="t" style="left:179px;top:649px;font-size:16px;letter-spacing:-0.016px;">CurrentCarPickList : Car</div>
<div class="a" style="left:179px;top:665px;width:99px;height:14px;background:#e4e4e4;border:1px solid #707070"></div>
<div class="t" style="left:181px;top:668px;font-size:9px;letter-spacing:-0.002px;color:#000;">Add column from model</div>
<div class="a" style="left:185px;top:685px;width:5px;height:3px;background:rgba(205,205,205,.85);border-radius:1.5px"></div>
<div class="a" style="left:185px;top:691px;width:5px;height:3px;background:rgba(205,205,205,.85);border-radius:1.5px"></div>
<div class="a" style="left:190px;top:684px;width:9px;height:10px;background:#fdfdfd;border-radius:2px"><svg width="9" height="10" viewBox="0 0 9 10" style="position:absolute;left:0;top:0" fill="none" stroke="#f28c1e" stroke-width="1.100"><path d="M2.300 7.500L4.500 3L6.700 7.500M3.200 6h2.600"/></svg></div>
<div class="t" style="left:200px;top:685px;font-size:11px;letter-spacing:-0.017px;">Presentation : self.asString</div>
<svg class="a" style="left:128px;top:176px" width="840" height="680" viewBox="128 176 840 680" fill="none" stroke="#111" stroke-width="1"><path d="M192 375.500H171.500V394H180"/><path d="M179.500 388L188 393.800L179.500 399.500Z" fill="#111" stroke="none"/><path d="M522 393.500H538.500V656.500H369"/><path d="M361 656.500L369.500 651V662Z" fill="#111" stroke="none"/><path d="M522 411.500H548.500V526.500H520"/><path d="M512 526.500L520.500 521V532Z" fill="#111" stroke="none"/></svg>
<div class="t" style="left:975px;top:183px;font-size:11px;letter-spacing:-0.046px;">Use placing hints:</div>
<div class="a" style="left:1086px;top:182px;width:13px;height:13px;background:#fff;border:1px solid #4a4a4a"><svg width="11" height="11" viewBox="0 0 11 11" style="position:absolute;left:0;top:0" fill="none" stroke="#111" stroke-width="1.700"><path d="M2 5.500L4.500 8.200L9.200 2.300"/></svg></div>
<div class="t" style="left:975px;top:199px;font-size:11px;letter-spacing:-0.134px;">CodeGen :</div>
<div class="a" style="left:1086px;top:198px;width:13px;height:13px;background:#fff;border:1px solid #4a4a4a"></div>
<div class="a" style="left:1770px;top:156px;width:37px;height:20px;background:#90ee90"></div>
<div class="t" style="left:1773px;top:159px;font-size:11.5px;letter-spacing:-0.266px;">UIFirst</div>
<div class="a" style="left:1728px;top:182px;width:13px;height:13px;background:#fff;border:1px solid #4a4a4a"><svg width="11" height="11" viewBox="0 0 11 11" style="position:absolute;left:0;top:0" fill="none" stroke="#111" stroke-width="1.700"><path d="M2 5.500L4.500 8.200L9.200 2.300"/></svg></div>
<div class="t" style="left:1747px;top:181px;font-size:11px;letter-spacing:-0.047px;">Label on top</div>
<div class="a" style="left:1626px;top:196px;width:76px;height:17px;background:#e1e1e1;border:1px solid #707070"></div>
<div class="t" style="left:1628.5px;top:198px;font-size:11.5px;letter-spacing:-0.244px;color:#000;">Tagged values</div>
<div class="a" style="left:1701px;top:196px;width:105px;height:17px;background:#e1e1e1;border:1px solid #707070"></div>
<div class="t" style="left:1704px;top:198px;font-size:11.5px;letter-spacing:-0.289px;color:#000;">Analyze expressions</div>
<div class="a" style="left:971px;top:218px;width:840px;height:17px;background:#90ee90;border-top:1px solid #a3ada3;border-bottom:1px solid #a3ada3"></div>
<div class="t" style="left:973.5px;top:220px;font-size:13.5px;letter-spacing:0.215px;">ViewModel Column in Root ViewModel class - self refers to root object</div>
<svg class="a" style="left:971px;top:237px" width="20" height="20" viewBox="0 0 20 20" fill="none"><circle cx="10" cy="10" r="9" fill="#fff" stroke="#222" stroke-width="1"/><path d="M6.500 11.500L10 8L13.500 11.500" stroke="#222" stroke-width="1.500"/></svg>
<div class="t" style="left:995px;top:242px;font-size:11px;letter-spacing:-0.014px;">Properties</div>
<div class="t" style="left:976px;top:265px;font-size:11px;letter-spacing:-0.081px;">Name:</div>
<div class="t" style="left:976px;top:280px;font-size:11px;letter-spacing:-0.135px;">Expression:</div>
<div class="t" style="left:976px;top:297px;font-size:11px;letter-spacing:-0.037px;">AssociatedTo:</div>
<div class="t" style="left:976px;top:315px;font-size:11px;letter-spacing:0.013px;">Presentation:</div>
<div class="t" style="left:976px;top:331px;font-size:11px;letter-spacing:-0.138px;">Column:</div>
<div class="t" style="left:976px;top:345px;font-size:11px;letter-spacing:-0.016px;">Row:</div>
<div class="t" style="left:976px;top:362px;font-size:11px;letter-spacing:-0.103px;">Is action:</div>
<div class="t" style="left:976px;top:380px;font-size:11px;letter-spacing:0.004px;">Column for picklist:</div>
<div class="t" style="left:976px;top:401px;font-size:11px;letter-spacing:0.166px;">Is static:</div>
<div class="t" style="left:976px;top:420px;font-size:11px;letter-spacing:-0.015px;">Disabled Expression</div>
<div class="t" style="left:976px;top:438px;font-size:11px;letter-spacing:0.014px;">Visible Expression:</div>
<div class="t" style="left:976px;top:457px;font-size:11px;letter-spacing:-0.041px;">Style ref:</div>
<div class="t" style="left:976px;top:503px;font-size:11px;letter-spacing:-0.023px;">Margins:</div>
<div class="a" style="left:1086px;top:262px;width:720px;height:15px;background:#fff;border:1px solid #a9abb3"></div>
<div class="t" style="left:1089px;top:265px;font-size:11px;letter-spacing:-0.02px;">Save</div>
<div class="a" style="left:1086px;top:277px;width:700px;height:16px;background:#fff;border:1px solid #2f7fd6;box-shadow:inset 0 0 0 1px #cfe2f7"></div>
<div class="a" style="left:1090px;top:279px;width:1px;height:12px;background:#000"></div>
<div class="a" style="left:1786px;top:277px;width:20px;height:16px;background:#e1e1e1;border:1px solid #8a8a8a"></div>
<div class="t" style="left:1791.5px;top:280px;font-size:11px;letter-spacing:-0.057px;color:#333;">...</div>
<div class="a" style="left:1086px;top:294px;width:126px;height:18px;background:#e6e6e6;border:1px solid #adadad"><svg style="position:absolute;right:5px;top:5.0px" width="8" height="6" viewBox="0 0 8 6" fill="none" stroke="#444" stroke-width="1.100"><path d="M1.400 1.400L4 4L6.600 1.400"/></svg></div>
<div class="a" style="left:1086px;top:312px;width:100px;height:16px;background:#fff;border:1px solid #a2a2aa"></div>
<div class="t" style="left:1089px;top:314px;font-size:11px;letter-spacing:-0.23px;">&lt;ActionName&gt;</div>
<div class="t" style="left:1189px;top:315px;font-size:11px;letter-spacing:-0.15px;">Span:</div>
<div class="a" style="left:1221px;top:312px;width:50px;height:16px;background:#fff;border:1px solid #a2a2aa"></div>
<div class="t" style="left:1224px;top:314px;font-size:11px;">1</div>
<div class="a" style="left:1272px;top:313px;width:13px;height:13px;background:#fff;border:1px solid #4a4a4a"></div>
<div class="t" style="left:1290px;top:313px;font-size:11px;letter-spacing:-0.083px;">Content override</div>
<div class="a" style="left:1375px;top:312px;width:34px;height:16px;background:#e1e1e1;border:1px solid #666"></div>
<div class="t" style="left:1378px;top:315px;font-size:11px;letter-spacing:-0.281px;color:#000;">Icon...</div>
<div class="a" style="left:1411px;top:313px;width:13px;height:13px;background:#fff;border:1px solid #4a4a4a"></div>
<div class="t" style="left:1430px;top:312px;font-size:11px;letter-spacing:-0.022px;">after/before</div>
<div class="t" style="left:1089px;top:331px;font-size:11px;letter-spacing:-0.15px;">Span:</div>
<div class="a" style="left:1121px;top:328px;width:50px;height:15px;background:#fff;border:1px solid #a2a2aa"></div>
<div class="t" style="left:1124px;top:330px;font-size:11px;">4</div>
<div class="a" style="left:1172px;top:329px;width:14px;height:13px;background:#fff;border:1px solid #4a4a4a"></div>
<div class="t" style="left:1190px;top:331px;font-size:11px;letter-spacing:-0.036px;">Not Visible</div>
<div class="t" style="left:1089px;top:345px;font-size:11px;letter-spacing:-0.15px;">Span:</div>
<div class="a" style="left:1121px;top:343px;width:50px;height:15px;background:#fff;border:1px solid #a2a2aa"></div>
<div class="t" style="left:1124px;top:345px;font-size:11px;">1</div>
<div class="a" style="left:1087px;top:360px;width:14px;height:14px;background:#fff;border:1px solid #4a4a4a"><svg width="11" height="11" viewBox="0 0 11 11" style="position:absolute;left:0;top:0" fill="none" stroke="#111" stroke-width="1.700"><path d="M2 5.500L4.500 8.200L9.200 2.300"/></svg></div>
<div class="a" style="left:1112px;top:358px;width:100px;height:18px;background:#e6e6e6;border:1px solid #adadad"><svg style="position:absolute;right:5px;top:5.0px" width="8" height="6" viewBox="0 0 8 6" fill="none" stroke="#444" stroke-width="1.100"><path d="M1.400 1.400L4 4L6.600 1.400"/></svg></div>
<div class="a" style="left:1212px;top:358px;width:13px;height:18px;background:#e1e1e1;border:1px solid #8a8a8a"></div>
<div class="t" style="left:1214.0px;top:363px;font-size:11px;letter-spacing:-0.057px;color:#333;">...</div>
<div class="t" style="left:1228px;top:362px;font-size:11px;letter-spacing:-0.127px;">Interval:</div>
<div class="a" style="left:1275px;top:358px;width:30px;height:18px;background:#fff;border:1px solid #a2a2aa"></div>
<div class="t" style="left:1278px;top:360px;font-size:11px;letter-spacing:-0.391px;">-1</div>
<div class="t" style="left:1627px;top:362px;font-size:11px;letter-spacing:-0.087px;">Rendered by:</div>
<div class="a" style="left:1705px;top:358px;width:101px;height:18px;background:#e6e6e6;border:1px solid #adadad"><svg style="position:absolute;right:5px;top:5.0px" width="8" height="6" viewBox="0 0 8 6" fill="none" stroke="#444" stroke-width="1.100"><path d="M1.400 1.400L4 4L6.600 1.400"/></svg></div>
<div class="a" style="left:1086px;top:376px;width:126px;height:19px;background:#e6e6e6;border:1px solid #adadad"><svg style="position:absolute;right:5px;top:5.5px" width="8" height="6" viewBox="0 0 8 6" fill="none" stroke="#444" stroke-width="1.100"><path d="M1.400 1.400L4 4L6.600 1.400"/></svg></div>
<div class="t" style="left:1569px;top:380px;font-size:11px;letter-spacing:-0.203px;">Null:</div>
<div class="a" style="left:1593px;top:376px;width:55px;height:19px;background:#e6e6e6;border:1px solid #adadad"><svg style="position:absolute;right:5px;top:5.5px" width="8" height="6" viewBox="0 0 8 6" fill="none" stroke="#444" stroke-width="1.100"><path d="M1.400 1.400L4 4L6.600 1.400"/></svg></div>
<div class="t" style="left:1599px;top:380px;font-size:11px;letter-spacing:-0.074px;">None</div>
<div class="t" style="left:1651px;top:379px;font-size:11px;letter-spacing:-0.148px;">NullRep:</div>
<div class="a" style="left:1705px;top:376px;width:101px;height:19px;background:#fff;border:1px solid #a2a2aa"></div>
<div class="a" style="left:1087px;top:399px;width:14px;height:14px;background:#fff;border:1px solid #4a4a4a"></div>
<div class="t" style="left:1117px;top:401px;font-size:11px;letter-spacing:-0.082px;">Is Groupbox:</div>
<div class="a" style="left:1184px;top:399px;width:14px;height:14px;background:#fff;border:1px solid #4a4a4a"></div>
<div class="t" style="left:1214px;top:401px;font-size:11px;letter-spacing:-0.076px;">Include in Groupbox:</div>
<div class="a" style="left:1318px;top:395px;width:28px;height:21px;background:#e6e6e6;border:1px solid #adadad"><svg style="position:absolute;right:5px;top:6.5px" width="8" height="6" viewBox="0 0 8 6" fill="none" stroke="#444" stroke-width="1.100"><path d="M1.400 1.400L4 4L6.600 1.400"/></svg></div>
<div class="a" style="left:1086px;top:417px;width:700px;height:15px;background:#fff;border:1px solid #a2a2aa"></div>
<div class="a" style="left:1786px;top:417px;width:20px;height:16px;background:#e1e1e1;border:1px solid #8a8a8a"></div>
<div class="t" style="left:1791.5px;top:420px;font-size:11px;letter-spacing:-0.057px;color:#333;">...</div>
<div class="a" style="left:1086px;top:434px;width:605px;height:17px;background:#fff;border:1px solid #a2a2aa"></div>
<div class="a" style="left:1692px;top:436px;width:13px;height:13px;background:#fff;border:1px solid #4a4a4a"></div>
<div class="t" style="left:1711px;top:435px;font-size:11px;letter-spacing:-0.004px;">FollowEnable</div>
<div class="a" style="left:1786px;top:433px;width:20px;height:18px;background:#e1e1e1;border:1px solid #8a8a8a"></div>
<div class="t" style="left:1791.5px;top:438px;font-size:11px;letter-spacing:-0.057px;color:#333;">...</div>
<div class="a" style="left:1086px;top:452px;width:485px;height:18px;background:#fff;border:1px solid #a2a2aa"></div>
<div class="a" style="left:1572px;top:455px;width:14px;height:14px;background:#fff;border:1px solid #4a4a4a"></div>
<div class="t" style="left:1591px;top:453px;font-size:11px;letter-spacing:-0.103px;">IsExp</div>
<div class="a" style="left:1621px;top:452px;width:20px;height:18px;background:#e1e1e1;border:1px solid #c4c4c4"></div>
<div class="t" style="left:1626.5px;top:457px;font-size:11px;letter-spacing:-0.057px;color:#999;">...</div>
<div class="a" style="left:1640px;top:452px;width:53px;height:18px;background:#e1e1e1;border:1px solid #666"></div>
<div class="t" style="left:1643px;top:457px;font-size:11.5px;letter-spacing:-0.35px;color:#000;">Pick Style</div>
<div class="a" style="left:1772px;top:452px;width:34px;height:18px;background:#e1e1e1;border:1px solid #666"></div>
<div class="t" style="left:1774px;top:457px;font-size:11.5px;letter-spacing:-0.388px;color:#000;">Styles</div>
<div class="a" style="left:1116px;top:481px;width:30px;height:18px;background:#fff;border:1px solid #a2a2aa"></div>
<div class="a" style="left:1086px;top:499px;width:30px;height:18px;background:#fff;border:1px solid #a2a2aa"></div>
<div class="a" style="left:1146px;top:499px;width:30px;height:18px;background:#fff;border:1px solid #a2a2aa"></div>
<div class="a" style="left:1116px;top:517px;width:30px;height:18px;background:#fff;border:1px solid #a2a2aa"></div>
<div class="t" style="left:1206px;top:482px;font-size:11px;letter-spacing:0.025px;">Primary(Y-Direction)min:</div>
<div class="a" style="left:1346px;top:481px;width:30px;height:18px;background:#fff;border:1px solid #a2a2aa"></div>
<div class="t" style="left:1379px;top:482px;font-size:11px;letter-spacing:-0.211px;">max:</div>
<div class="a" style="left:1406px;top:481px;width:30px;height:18px;background:#fff;border:1px solid #a2a2aa"></div>
<div class="t" style="left:1439px;top:482px;font-size:11px;letter-spacing:-0.001px;">grow(&gt;1 Y-Direction):</div>
<div class="a" style="left:1543px;top:481px;width:30px;height:18px;background:#fff;border:1px solid #a2a2aa"></div>
<div class="t" style="left:1206px;top:500px;font-size:11px;letter-spacing:-0.004px;">Secondary(X-Direction)min:</div>
<div class="a" style="left:1347px;top:499px;width:30px;height:18px;background:#fff;border:1px solid #a2a2aa"></div>
<div class="t" style="left:1380px;top:500px;font-size:11px;letter-spacing:-0.211px;">max:</div>
<div class="a" style="left:1407px;top:499px;width:30px;height:18px;background:#fff;border:1px solid #a2a2aa"></div>
<div class="t" style="left:1206px;top:521px;font-size:11px;letter-spacing:-0.036px;">Self-Align(X-Direction):</div>
<div class="a" style="left:1318px;top:517px;width:69px;height:18px;background:#e6e6e6;border:1px solid #adadad"><svg style="position:absolute;right:5px;top:5.0px" width="8" height="6" viewBox="0 0 8 6" fill="none" stroke="#444" stroke-width="1.100"><path d="M1.400 1.400L4 4L6.600 1.400"/></svg></div>
<div class="t" style="left:1324px;top:521px;font-size:11px;letter-spacing:-0.107px;">NotSet</div>
<div class="t" style="left:1393px;top:521px;font-size:11px;letter-spacing:-0.169px;">Override Parent:</div>
<div class="t" style="left:1483.5px;top:521px;font-size:11px;letter-spacing:-0.107px;">NotSet</div>
<div class="a" style="left:1221px;top:575px;width:299px;height:417px;background:#d5d5d5"></div>
<div class="a" style="left:1221px;top:578px;width:297px;height:26px;background:#fff;border-left:1px solid #9a9a9a;border-right:1px solid #c8c8c8;border-top:1px solid #e0e0e0;border-bottom:1px solid #6e6e6e"></div>
<div class="t" style="left:1226px;top:580px;font-size:10.5px;letter-spacing:-0.129px;color:#919191;">Name</div>
<div class="a" style="left:1221px;top:608px;width:297px;height:27px;background:#fff;border-left:1px solid #9a9a9a;border-right:1px solid #c8c8c8;border-top:1px solid #e0e0e0;border-bottom:1px solid #6e6e6e"></div>
<div class="t" style="left:1226px;top:611px;font-size:10.5px;letter-spacing:-0.188px;color:#919191;">Age (Years)</div>
<div class="a" style="left:1224px;top:639px;width:294px;height:32px;background:#3567aa;border-radius:3px;box-shadow:0 1px 2px rgba(0,0,0,.5)"></div>
<div class="t" style="left:1339px;top:648px;font-size:14px;letter-spacing:0.021px;color:#fff;">Delete Me</div>
<div class="a" style="left:1224px;top:674px;width:294px;height:32px;background:#3567aa;border-radius:3px;box-shadow:0 1px 2px rgba(0,0,0,.5)"></div>
<div class="t" style="left:1290px;top:683px;font-size:14px;letter-spacing:0.109px;color:#fff;">Add A Car I Used To Own</div>
<div class="a" style="left:1221px;top:709px;width:297px;height:38px;background:#fff;border-left:1px solid #9a9a9a;border-right:1px solid #c8c8c8;border-top:1px solid #e0e0e0;border-bottom:1px solid #6e6e6e"></div>
<div class="t" style="left:1226px;top:711px;font-size:10.5px;letter-spacing:-0.169px;color:#919191;">Current Car</div>
<svg class="a" style="left:1509px;top:735px" width="8" height="5" viewBox="0 0 8 5"><path d="M0 0h8L4 4.500Z" fill="#777"/></svg>
<div class="a" style="left:1221px;top:747px;width:299px;height:27px;background:#d3d3d3"></div>
<div class="t" style="left:1231px;top:753px;font-size:16px;letter-spacing:-0.043px;color:#111;">Historic Ownership</div>
<div class="a" style="left:1221px;top:773px;width:297px;height:186px;background:#fff;border:1px solid #b4b4b4;border-radius:4px 3px 3px 3px"></div>
<div class="a" style="left:1223px;top:798px;width:294px;height:1px;background:#c8c8c8"></div>
<div class="a" style="left:1226px;top:773px;width:26px;height:25px;overflow:hidden;color:#6a6670"><div class="t" style="left:0;top:2px;font-size:11px;letter-spacing:-.05px">Date</div><div class="t" style="left:0;top:14px;font-size:11px;letter-spacing:-.05px">Purchased</div></div>
<div class="a" style="left:1271px;top:773px;width:40px;height:25px;overflow:hidden;color:#6a6670"><div class="t" style="left:0;top:2px;font-size:11px;letter-spacing:-.05px">Date</div><div class="t" style="left:0;top:14px;font-size:11px;letter-spacing:-.05px">Sold</div></div>
<div class="a" style="left:1316px;top:773px;width:26.5px;height:25px;overflow:hidden;color:#6a6670"><div class="t" style="left:0;top:2px;font-size:11px;letter-spacing:-.05px">Registration</div><div class="t" style="left:0;top:14px;font-size:11px;letter-spacing:-.05px">Number</div></div>
<svg class="a" style="left:1252.5px;top:781px" width="10" height="9" viewBox="0 0 10 9"><path d="M0 0h10L6 4v5l-2-1V4z" fill="#f3f3f3"/></svg>
<svg class="a" style="left:1295px;top:781px" width="10" height="9" viewBox="0 0 10 9"><path d="M0 0h10L6 4v5l-2-1V4z" fill="#f3f3f3"/></svg>
<svg class="a" style="left:1343px;top:781px" width="10" height="9" viewBox="0 0 10 9"><path d="M0 0h10L6 4v5l-2-1V4z" fill="#f3f3f3"/></svg>
<svg class="a" style="left:1491px;top:778px" width="22" height="6" viewBox="0 0 22 6" fill="#3567aa"><circle cx="3" cy="3" r="2.600"/><circle cx="10.700" cy="3" r="2.600"/><circle cx="18.400" cy="3" r="2.600"/></svg>
<div class="a" style="left:1224px;top:960px;width:294px;height:32px;background:#3567aa;border-radius:3px;box-shadow:0 1px 2px rgba(0,0,0,.5)"></div>
<div class="t" style="left:1355px;top:970px;font-size:14px;letter-spacing:0.02px;color:#fff;">Save</div>
<div class="a" style="left:1775px;top:541px;width:35px;height:350px;background:#dedede"></div>
<div class="a" style="left:1775px;top:576px;width:35px;height:1px;background:#c6c6c6"></div>
<div class="a" style="left:1775px;top:611px;width:35px;height:1px;background:#c6c6c6"></div>
<div class="a" style="left:1775px;top:646px;width:35px;height:1px;background:#c6c6c6"></div>
<div class="a" style="left:1775px;top:681px;width:35px;height:1px;background:#c6c6c6"></div>
<div class="a" style="left:1775px;top:716px;width:35px;height:1px;background:#c6c6c6"></div>
<div class="a" style="left:1775px;top:751px;width:35px;height:1px;background:#c6c6c6"></div>
<div class="a" style="left:1775px;top:786px;width:35px;height:1px;background:#c6c6c6"></div>
<div class="a" style="left:1775px;top:821px;width:35px;height:1px;background:#c6c6c6"></div>
<div class="a" style="left:1775px;top:856px;width:35px;height:1px;background:#c6c6c6"></div>
<svg class="a" style="left:1775px;top:541px" width="35" height="350" viewBox="1775 541 35 350" fill="none" stroke-linejoin="round"><path d="M1796 553.500H1784.500V566.500H1799.500V561" stroke="#111" stroke-width="1.600"/><path d="M1787 564.300l1.200-4.500 8.800-8.800 3.400 3.400-8.800 8.800z" fill="#111"/><path d="M1796.500 629V634.500H1786.500V624.500H1795" stroke="#111" stroke-width="1.500"/><path d="M1788.500 628L1791.500 631.500L1799.500 623" stroke="#111" stroke-width="2"/><path d="M1781.500 658.500H1795V662.500H1781.500ZM1781.500 666H1795V669.500H1781.500ZM1781.500 662.500V666M1795 662.500V666" stroke="#111" stroke-width="1.700"/><path d="M1799.500 658V669M1796.200 665.500L1799.500 669.500L1802.800 665.500" stroke="#111" stroke-width="1.800"/><path d="M1783 692.500H1801V707H1783Z" fill="#111"/><path d="M1786.500 690v3.500M1797.500 690v3.500" stroke="#111" stroke-width="2.200" stroke-linecap="round"/><rect x="1784.6" y="696.3" width="2.800" height="2.300" fill="#dedede"/><rect x="1788.6" y="696.3" width="2.800" height="2.300" fill="#dedede"/><rect x="1792.6" y="696.3" width="2.800" height="2.300" fill="#dedede"/><rect x="1796.6" y="696.3" width="2.800" height="2.300" fill="#dedede"/><rect x="1784.6" y="699.7" width="2.800" height="2.300" fill="#dedede"/><rect x="1788.6" y="699.7" width="2.800" height="2.300" fill="#dedede"/><rect x="1792.6" y="699.7" width="2.800" height="2.300" fill="#dedede"/><rect x="1796.6" y="699.7" width="2.800" height="2.300" fill="#dedede"/><rect x="1784.6" y="703.1" width="2.800" height="2.300" fill="#dedede"/><rect x="1788.6" y="703.1" width="2.800" height="2.300" fill="#dedede"/><rect x="1792.6" y="703.1" width="2.800" height="2.300" fill="#dedede"/><rect x="1796.6" y="703.1" width="2.800" height="2.300" fill="#dedede"/><rect x="1783.500" y="726.500" width="17" height="14.500" stroke="#111" stroke-width="1.500"/><path d="M1789 729l1.500 1.500 1.500-1.800 1.500 1.800 1.500-1.500v4.500h-6zM1791.200 734h1.600v2.500l3.500-2v3l-3 2h-2.600l-3-2v-3l3.500 2z" fill="#111"/><rect x="1782.700" y="763.700" width="18.600" height="9.600" rx="2.500" stroke="#111" stroke-width="1.500"/><rect x="1783.500" y="795.500" width="17" height="15.500" stroke="#111" stroke-width="1.400"/><path d="M1784 803.800h16M1784 806.200h16M1784 808.600h16" stroke="#111" stroke-width=".9"/><path d="M1792 830.500L1798.500 834L1792 837.500L1785.500 834Z" fill="#111"/><path d="M1785.500 835.200L1791.400 838.500V846L1785.500 842.500Z" fill="#555"/><path d="M1798.500 835.200L1792.600 838.500V846L1798.500 842.500Z" fill="#888"/><path d="M1785 832.500C1783.500 836 1783.500 841 1785 844.500M1799 832.500C1800.500 836 1800.500 841 1799 844.500" stroke="#111" stroke-width="1.100"/><rect x="1782.500" y="864.500" width="21" height="17" rx="2" stroke="#111" stroke-width="1"/><path d="M1782.500 868.500h21M1785 866.500h5M1796.500 866.500h1M1798.800 866.500h1M1801 866.500h1" stroke="#111" stroke-width=".9"/><rect x="1786.500" y="870.500" width="14.500" height="14.500" rx="2" fill="#dedede" stroke="#111" stroke-width="1"/><path d="M1788.500 874v-1.800h2M1797 872.200h2v1.800M1799 881v1.800h-2M1790.500 882.800h-2V881" stroke="#111" stroke-width=".9"/><path d="M1789.500 877.500c2.500-3 6-3 8.500 0c-2.500 3-6 3-8.500 0z" stroke="#111" stroke-width=".9"/><circle cx="1793.700" cy="877.500" r="1.300" stroke="#111" stroke-width=".9"/></svg>
<div class="t" style="left:1783.5px;top:582px;font-size:25px;letter-spacing:0.312px;color:#111;font-weight:700;font-family:'Liberation Serif',sans-serif;-webkit-text-stroke:.5px #111;">T</div>
<div class="t" style="left:1786px;top:766px;font-size:7.5px;letter-spacing:0.109px;color:#111;font-weight:700;">btn</div>
<div class="t" style="left:1785.5px;top:797px;font-size:7.5px;letter-spacing:0.039px;color:#111;font-weight:700;">list</div>
<div class="a" style="left:971px;top:1031px;width:13px;height:13px;background:#fff;border:1px solid #4a4a4a"></div>
<div class="t" style="left:990.5px;top:1030px;font-size:11px;letter-spacing:-0.016px;">Show tab-order</div>
<div class="a" style="left:1068px;top:1026px;width:16px;height:22px;background:#e1e1e1;border:1px solid #6a6a6a"></div>
<div class="t" style="left:1070px;top:1031px;font-size:12px;letter-spacing:-0.448px;color:#000;">Fit</div>
<div class="t" style="left:1094px;top:1032px;font-size:11px;letter-spacing:-0.031px;">Width:</div>
<div class="a" style="left:1138px;top:1036px;width:84px;height:3px;background:#e7eaea;border:1px solid #d6d6d6"></div>
<div class="a" style="left:1128px;top:1029px;width:11px;height:18px;background:#f2f2f2;border:1px solid #c2c2c2"></div>
<div class="t" style="left:1238px;top:1032px;font-size:11px;letter-spacing:0.02px;">Height:</div>
<div class="a" style="left:1291px;top:1036px;width:79px;height:3px;background:#e7eaea;border:1px solid #d6d6d6"></div>
<div class="a" style="left:1281px;top:1029px;width:11px;height:18px;background:#f2f2f2;border:1px solid #c2c2c2"></div>
<div class="t" style="left:1385.5px;top:1032px;font-size:11px;letter-spacing:0.102px;">x:300 y:418</div>
<div class="t" style="left:970px;top:1054px;font-size:8.5px;letter-spacing:-0.234px;">Screen size marker</div>
<div class="a" style="left:1039px;top:1052px;width:19px;height:12px;background:#fff;border:1px solid #b5b5b5"></div>
<div class="t" style="left:1042px;top:1055px;font-size:8px;letter-spacing:-0.12px;">758</div>
<div class="t" style="left:1059px;top:1055px;font-size:8px;">X</div>
<div class="a" style="left:1063px;top:1052px;width:19px;height:12px;background:#fff;border:1px solid #b5b5b5"></div>
<div class="t" style="left:1066px;top:1055px;font-size:8px;letter-spacing:-0.12px;">600</div>
<div class="t" style="left:1083px;top:1054px;font-size:8.5px;letter-spacing:-0.337px;">SuggestedZoom</div>
<div class="a" style="left:1142px;top:1052px;width:30px;height:12px;background:#fff;border:1px solid #b5b5b5"></div>
<div class="a" style="left:1172px;top:1049px;width:78px;height:18px;background:#e1e1e1;border:1px solid #666"></div>
<div class="t" style="left:1174px;top:1055px;font-size:8px;letter-spacing:-0.032px;color:#000;">Set shrink zoom to fit</div>
<div class="a" style="left:1260px;top:1049px;width:149px;height:18px;background:#e1e1e1;border:1px solid #666"></div>
<div class="t" style="left:1262.5px;top:1053px;font-size:11.5px;letter-spacing:-0.305px;color:#000;">WebApp Prototype Edit-Mode</div>
<svg class="a" style="left:1100px;top:150px;filter:drop-shadow(-1px 2px 2px rgba(0,0,0,.45))" width="140" height="130" viewBox="1100 150 140 130"><path d="M1214.200 164.600C1191 197 1164.500 226.500 1143.500 255.500L1149 257.800L1122.300 270L1131 243L1133.200 248.400C1157.500 219.500 1187 191 1212.300 163.200Z" fill="#00aeee"/></svg>
</body></html>
